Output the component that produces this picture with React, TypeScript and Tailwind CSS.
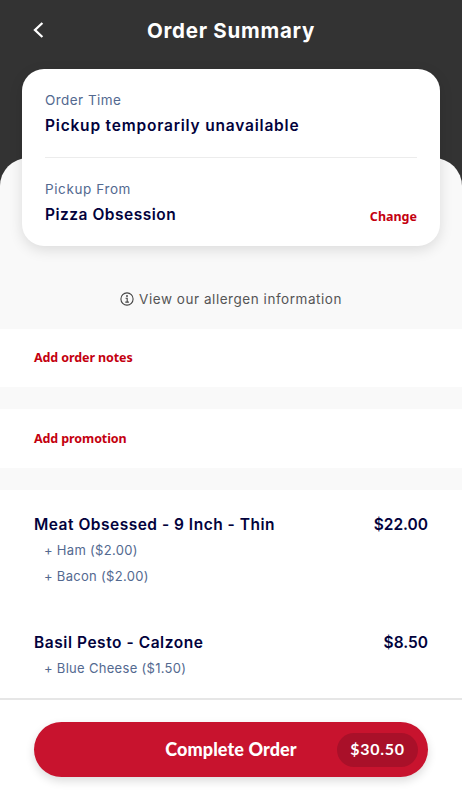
import type { ReactNode } from 'react'

const ITEMS = [
  {
    name: 'Meat Obsessed - 9 Inch - Thin',
    price: '$22.00',
    nameSpacing: 'tracking-[0.5px]',
    extras: ['+ Ham ($2.00)', '+ Bacon ($2.00)'],
  },
  {
    name: 'Basil Pesto - Calzone',
    price: '$8.50',
    nameSpacing: 'tracking-[0.55px]',
    extras: ['+ Blue Cheese ($1.50)'],
  },
]

function BackIcon() {
  return (
    <svg width="12" height="16" viewBox="0 0 12 16" fill="none" stroke="#fff" strokeWidth="2.3">
      <path d="M10.4 1 3 8l7.4 7" />
    </svg>
  )
}

function InfoIcon() {
  return (
    <svg width="14" height="14" viewBox="0 0 14 14" fill="none" stroke="#444" strokeWidth="1.1">
      <circle cx="7" cy="7" r="6.1" />
      <path d="M5.6 6.2h1.6v3.9M5.3 10.1h3.6" />
      <circle cx="7" cy="4" r=".95" fill="#444" stroke="none" />
    </svg>
  )
}

function RedLink({ children, className }: { children: ReactNode; className?: string }) {
  return (
    <button className={`font-['Noto_Sans',sans-serif] text-[12.5px] leading-[18px] font-bold text-[#c4000f] ${className ?? ''}`}>
      {children}
    </button>
  )
}

export default function App() {
  return (
    <div className="flex h-[800px] w-full flex-col overflow-hidden bg-[#333] font-['Inter',sans-serif] text-[#02023c]">
      <header className="grid h-[158px] shrink-0 grid-cols-[1fr_auto_1fr] items-start">
        <button className="mt-[22px] ml-8 w-3" aria-label="Back">
          <BackIcon />
        </button>
        <h1 className="mt-[18px] text-[20.5px] leading-[26px] font-bold tracking-[0.75px] whitespace-nowrap text-white">
          Order Summary
        </h1>
      </header>

      <main className="min-h-0 flex-1 rounded-t-[28px] bg-[#f9f9f9]">
        <section className="relative mx-[22px] -mt-[89px] h-[177px] rounded-[22px] bg-white px-[23px] pt-[22px] shadow-[0_4px_14px_rgba(0,0,0,0.12)]">
          <p className="text-[13.5px] leading-[18px] tracking-[0.45px] text-[#536990]">Order Time</p>
          <p className="mt-[7px] text-[15.5px] leading-5 font-semibold tracking-[0.8px]">
            Pickup temporarily unavailable
          </p>
          <hr className="mt-[21px] border-[#ececec]" />
          <p className="mt-[22px] text-[13.5px] leading-[18px] tracking-[0.6px] text-[#536990]">Pickup From</p>
          <div className="mt-[6px] flex items-center justify-between">
            <p className="text-[15.5px] leading-5 font-semibold tracking-[0.5px]">Pizza Obsession</p>
            <RedLink className="mt-1">Change</RedLink>
          </div>
        </section>

        <div className="flex h-[83px] items-center justify-center gap-[5px] pt-[23px] text-[#555]">
          <InfoIcon />
          <p className="text-[13.5px] tracking-[0.54px]">View our allergen information</p>
        </div>

        <div className="flex h-[58px] items-center bg-white px-[34px]">
          <RedLink className="tracking-[-0.1px]">Add order notes</RedLink>
        </div>
        <div className="mt-[22px] flex h-[59px] items-center bg-white px-[34px]">
          <RedLink className="tracking-[-0.1px]">Add promotion</RedLink>
        </div>

        <div className="mt-[22px] h-[260px] space-y-[43px] bg-white px-[34px] pt-[25px]">
          {ITEMS.map((item) => (
            <div key={item.name}>
              <div className="flex justify-between text-[15.5px] leading-5 font-semibold">
                <h2 className={item.nameSpacing}>{item.name}</h2>
                <span>{item.price}</span>
              </div>
              <ul className="mt-0.5 -mb-px pb-[2px] pl-[10px] text-[13px] leading-[26px] tracking-[0.3px] text-[#536990]">
                {item.extras.map((extra) => (
                  <li key={extra}>{extra}</li>
                ))}
              </ul>
            </div>
          ))}
        </div>
      </main>

      <footer className="relative h-[102px] shrink-0 border-t-2 border-[#e6e6e6] bg-white px-[34px] pt-[22px]">
        <button className="grid h-[55px] w-[394px] grid-cols-[1fr_auto_1fr] items-center rounded-full bg-[#c8132e] font-['Lato',sans-serif] text-white shadow-[0_4px_10px_rgba(0,0,0,0.14)]">
          <span className="col-start-2 text-[18px] font-black tracking-[0.1px]">Complete Order</span>
          <span className="mr-[10px] flex h-[34px] w-[81px] items-center justify-center justify-self-end rounded-full bg-[#a91029] pb-0.5 text-[16px] font-bold tracking-[0.7px]">
            $30.50
          </span>
        </button>
      </footer>
    </div>
  )
}
